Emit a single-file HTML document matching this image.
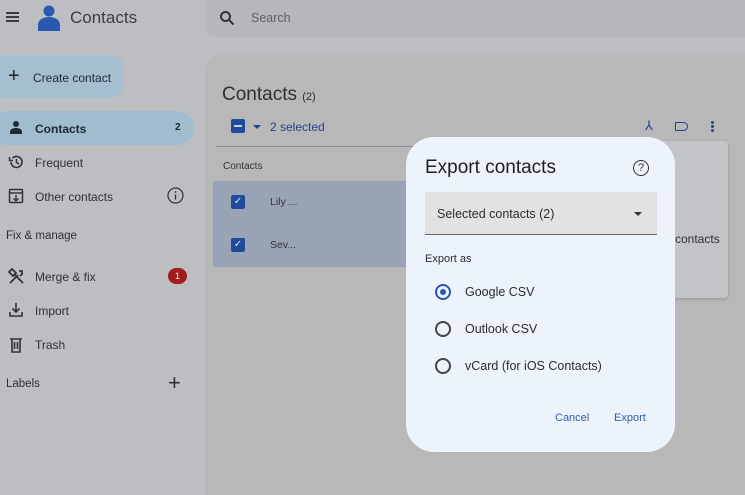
<!DOCTYPE html>
<html><head><style>
*{margin:0;padding:0;box-sizing:border-box}
body{width:745px;height:487px;overflow:hidden;background:#bdbec1;font-family:"Liberation Sans",sans-serif;position:relative;color:#2a2b2e}
.a{position:absolute}
.t{font-size:12px;color:#2f3033}
</style></head><body>
<!-- header -->
<div class="a" style="left:6px;top:12px;width:13px;height:2px;background:#3a3b3e;box-shadow:0 4px 0 #3a3b3e,0 8px 0 #3a3b3e"></div>
<svg class="a" style="left:37px;top:4px" width="24" height="27" viewBox="0 0 24 27"><circle cx="12" cy="7" r="5.5" fill="#2a58b0"/><path d="M1 27v-6c0-5 5-8 11-8s11 3 11 8v6z" fill="#2a58b0"/></svg>
<div class="a" style="left:70px;top:8px;font-size:17px;color:#3c3d40">Contacts</div>
<div class="a" style="left:206px;top:0;width:539px;height:37px;background:#b5b7bb;border-radius:0 0 0 8px"></div>
<svg class="a" style="left:219px;top:10px" width="16" height="16" viewBox="0 0 16 16"><circle cx="6.5" cy="6.5" r="4.5" fill="none" stroke="#333" stroke-width="2"/><path d="M10 10l4.5 4.5" stroke="#333" stroke-width="2"/></svg>
<div class="a" style="left:251px;top:11px;font-size:12.5px;color:#5d5f63">Search</div>
<!-- sidebar -->
<div class="a" style="left:-10px;top:55px;width:134px;height:43px;background:#a5bfd0;border-radius:14px"></div>
<div class="a" style="left:8px;top:68px;font-size:20px;line-height:16px;color:#222">+</div>
<div class="a t" style="left:33px;top:71px;color:#1e2a36">Create contact</div>
<div class="a" style="left:-10px;top:111px;width:204px;height:34px;background:#a1bbcf;border-radius:17px"></div>
<svg class="a" style="left:9px;top:120px" width="14" height="14" viewBox="0 0 14 14"><circle cx="7" cy="4" r="3" fill="#1f2a36"/><path d="M1 14v-2c0-3 3-4 6-4s6 1 6 4v2z" fill="#1f2a36"/></svg>
<div class="a t" style="left:35px;top:122px;font-weight:bold;color:#1e2a36">Contacts</div>
<div class="a t" style="left:175px;top:122px;font-size:10px;font-weight:bold;color:#1e2a36">2</div>
<svg class="a" style="left:8px;top:154px" width="16" height="16" viewBox="0 0 16 16"><path d="M3 8a5.5 5.5 0 1 0 1.6-3.9" fill="none" stroke="#333" stroke-width="1.6"/><path d="M1.5 3v3.5h3.5" fill="none" stroke="#333" stroke-width="1.5"/><path d="M8.5 5v3.5l2.5 1.5" fill="none" stroke="#333" stroke-width="1.5"/></svg>
<div class="a t" style="left:35px;top:156px">Frequent</div>
<svg class="a" style="left:8px;top:188px" width="16" height="16" viewBox="0 0 16 16"><rect x="1.5" y="1.5" width="13" height="13" rx="1" fill="none" stroke="#333" stroke-width="1.5"/><path d="M1.5 5h13M8 7v6M5.5 10.5l2.5 2.5 2.5-2.5" fill="none" stroke="#333" stroke-width="1.4"/></svg>
<div class="a t" style="left:35px;top:190px">Other contacts</div>
<svg class="a" style="left:167px;top:187px" width="17" height="17" viewBox="0 0 17 17"><circle cx="8.5" cy="8.5" r="7.5" fill="none" stroke="#333" stroke-width="1.2"/><path d="M8.5 7.5v5" stroke="#333" stroke-width="1.4"/><circle cx="8.5" cy="5" r=".9" fill="#333"/></svg>
<div class="a t" style="left:6px;top:230px;font-size:11.5px">Fix &amp; manage</div>
<svg class="a" style="left:8px;top:268px" width="17" height="17" viewBox="0 0 17 17"><path d="M2 15l8-8M6 6l9 9M1 4l3-3 4 4-3 3z M11 3l3 0 0 3-2 2" fill="none" stroke="#333" stroke-width="1.8"/></svg>
<div class="a t" style="left:35px;top:270px">Merge &amp; fix</div>
<div class="a" style="left:168px;top:268px;width:19px;height:16px;border-radius:8px;background:#a11d1d;color:#eee;font-size:9px;text-align:center;line-height:16px">1</div>
<svg class="a" style="left:8px;top:302px" width="16" height="16" viewBox="0 0 16 16"><path d="M8 1v9M4.5 6.5L8 10l3.5-3.5M2 10v4h12v-4" fill="none" stroke="#333" stroke-width="1.6"/></svg>
<div class="a t" style="left:35px;top:304px">Import</div>
<svg class="a" style="left:9px;top:337px" width="14" height="16" viewBox="0 0 14 16"><path d="M1 2h12M3 2v13h8V2M5.5 5v7M8.5 5v7" fill="none" stroke="#333" stroke-width="1.6"/></svg>
<div class="a t" style="left:35px;top:338px">Trash</div>
<div class="a t" style="left:6px;top:378px;font-size:11.5px">Labels</div>
<div class="a" style="left:168px;top:372px;font-size:22px;line-height:22px;color:#333">+</div>
<!-- main -->
<div class="a" style="left:205px;top:55px;width:560px;height:440px;background:#b8b8b9;border-radius:16px 0 0 0"></div>
<div class="a" style="left:222px;top:84px;font-size:19px;color:#2e2f32">Contacts <span style="font-size:11px">(2)</span></div>
<div class="a" style="left:231px;top:119px;width:14px;height:14px;background:#214a9a;border-radius:2px"><div style="margin:6px 3px;width:8px;height:2px;background:#c9d1e0"></div></div>
<div class="a" style="left:253px;top:125px;border:4px solid transparent;border-top:4px solid #24448a"></div>
<div class="a t" style="left:270px;top:120px;color:#24448a">2 selected</div>
<div class="a" style="left:645px;top:118px;font-size:13px;color:#24448a">⅄</div>
<div class="a" style="left:675px;top:122px;width:13px;height:9px;border:1.6px solid #24448a;border-radius:1px 5px 5px 1px"></div>
<div class="a" style="left:711px;top:121px;width:3px;height:3px;background:#24448a;border-radius:50%;box-shadow:0 4px 0 #24448a,0 8px 0 #24448a"></div>
<div class="a" style="left:216px;top:146px;width:510px;height:1px;background:#8e8f92"></div>
<div class="a" style="left:223px;top:161px;font-size:10px;color:#333">Contacts</div>
<div class="a" style="left:213px;top:181px;width:200px;height:86px;background:#98a4b6"></div>
<div class="a" style="left:231px;top:195px;width:14px;height:14px;background:#214a9a;border-radius:2px;color:#dfe6f2;font-size:10px;text-align:center;line-height:14px">✓</div>
<div class="a" style="left:231px;top:238px;width:14px;height:14px;background:#214a9a;border-radius:2px;color:#dfe6f2;font-size:10px;text-align:center;line-height:14px">✓</div>
<div class="a" style="left:270px;top:196px;font-size:10.5px;color:#333">Lily ...</div>
<div class="a" style="left:270px;top:239px;font-size:10.5px;color:#333">Sev...</div>
<div class="a" style="left:630px;top:141px;width:98px;height:157px;background:#c3c4c7;border-radius:4px;box-shadow:0 1px 3px rgba(0,0,0,.2)"></div>
<div class="a t" style="left:675px;top:232px">contacts</div>
<!-- dialog -->
<div class="a" style="left:406px;top:137px;width:269px;height:315px;background:#edf3fb;border-radius:28px"></div>
<div class="a" style="left:425px;top:157px;font-size:19px;color:#1f1f22">Export contacts</div>
<div class="a" style="left:633px;top:160px;width:16px;height:16px;border:1.4px solid #333;border-radius:50%;font-size:11px;text-align:center;line-height:14px;color:#333">?</div>
<div class="a" style="left:425px;top:192px;width:232px;height:43px;background:#e2e3e1;border-bottom:1.5px solid #6a6b6e"></div>
<div class="a" style="left:437px;top:207px;font-size:12.5px;color:#2b2c2f">Selected contacts (2)</div>
<div class="a" style="left:634px;top:212px;border:4px solid transparent;border-top:4px solid #333"></div>
<div class="a" style="left:425px;top:253px;font-size:11px;color:#2b2c2f">Export as</div>
<div class="a" style="left:435px;top:284px;width:16px;height:16px;border:2px solid #2a56b0;border-radius:50%"><div style="margin:3px;width:6px;height:6px;background:#2a56b0;border-radius:50%"></div></div>
<div class="a" style="left:435px;top:321px;width:16px;height:16px;border:2px solid #444;border-radius:50%"></div>
<div class="a" style="left:435px;top:358px;width:16px;height:16px;border:2px solid #444;border-radius:50%"></div>
<div class="a" style="left:465px;top:285px;font-size:12.5px;color:#2b2c2f">Google CSV</div>
<div class="a" style="left:465px;top:322px;font-size:12.5px;color:#2b2c2f">Outlook CSV</div>
<div class="a" style="left:465px;top:359px;font-size:12.5px;color:#2b2c2f">vCard (for iOS Contacts)</div>
<div class="a" style="left:555px;top:412px;font-size:11px;color:#2c5fa5">Cancel</div>
<div class="a" style="left:614px;top:412px;font-size:11px;color:#2c5fa5">Export</div>
</body></html>
